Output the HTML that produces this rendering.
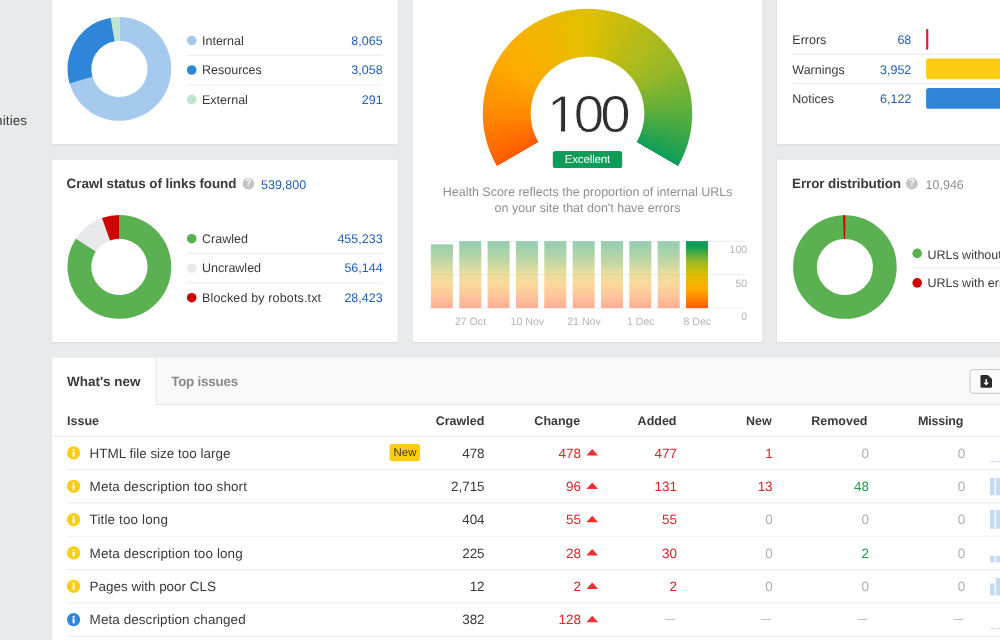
<!DOCTYPE html>
<html lang="en"><head><meta charset="utf-8"><title>Site Audit</title>
<style>
html,body{margin:0;padding:0;background:#e9eaec}
body{width:1000px;height:640px;overflow:hidden;background:#e9eaec;font-family:"Liberation Sans",sans-serif;font-size:12.5px;color:#3a3a3a;position:relative;text-rendering:geometricPrecision}
#w{position:absolute;left:0;top:0;width:1000px;height:640px;overflow:hidden;will-change:transform}
.abs{position:absolute}
.t{position:absolute;white-space:nowrap;line-height:20px}
svg{position:absolute;left:0;top:0}
</style></head>
<body>
<div id="w">
<svg width="1000" height="640" viewBox="0 0 1000 640"><defs><linearGradient id="bg" gradientUnits="userSpaceOnUse" x1="0" y1="241.1" x2="0" y2="308.15"><stop offset="0" stop-color="#0e9d58"/><stop offset="0.08" stop-color="#0e9d58"/><stop offset="0.3" stop-color="#98b828"/><stop offset="0.5" stop-color="#e0c000"/><stop offset="0.72" stop-color="#ffaa00"/><stop offset="1" stop-color="#ff5c00"/></linearGradient><linearGradient id="bp" gradientUnits="userSpaceOnUse" x1="0" y1="241.1" x2="0" y2="308.15"><stop offset="0" stop-color="#99ceaf"/><stop offset="0.08" stop-color="#9bcfae"/><stop offset="0.3" stop-color="#c0d7a4"/><stop offset="0.47" stop-color="#e7de9e"/><stop offset="0.62" stop-color="#f9da9b"/><stop offset="0.8" stop-color="#ffc89b"/><stop offset="1" stop-color="#ffad97"/></linearGradient></defs>
<rect x="50.70" y="-21.00" width="348.20" height="167.00" fill="#000" fill-opacity="0.018"/>
<rect x="51.40" y="-20.40" width="346.80" height="165.60" fill="#000" fill-opacity="0.02"/>
<rect x="51.90" y="-20.00" width="345.80" height="164.00" fill="#fff"/>
<rect x="50.70" y="158.60" width="348.20" height="185.40" fill="#000" fill-opacity="0.018"/>
<rect x="51.40" y="159.20" width="346.80" height="184.00" fill="#000" fill-opacity="0.02"/>
<rect x="51.90" y="159.60" width="345.80" height="182.40" fill="#fff"/>
<rect x="411.60" y="-21.00" width="351.80" height="365.00" fill="#000" fill-opacity="0.018"/>
<rect x="412.30" y="-20.40" width="350.40" height="363.60" fill="#000" fill-opacity="0.02"/>
<rect x="412.80" y="-20.00" width="349.40" height="362.00" fill="#fff"/>
<rect x="775.80" y="-21.00" width="255.40" height="167.00" fill="#000" fill-opacity="0.018"/>
<rect x="776.50" y="-20.40" width="254.00" height="165.60" fill="#000" fill-opacity="0.02"/>
<rect x="777.00" y="-20.00" width="253.00" height="164.00" fill="#fff"/>
<rect x="775.80" y="158.60" width="255.40" height="185.40" fill="#000" fill-opacity="0.018"/>
<rect x="776.50" y="159.20" width="254.00" height="184.00" fill="#000" fill-opacity="0.02"/>
<rect x="777.00" y="159.60" width="253.00" height="182.40" fill="#fff"/>
<rect x="50.70" y="356.50" width="980.50" height="345.50" fill="#000" fill-opacity="0.018"/>
<rect x="51.40" y="357.10" width="979.10" height="344.10" fill="#000" fill-opacity="0.02"/>
<rect x="51.90" y="357.50" width="978.10" height="342.50" fill="#fff"/>
<path fill="#a6caee" d="M119.40 17.00A51.9 51.9 0 1 1 69.42 82.88L92.34 76.47A28.1 28.1 0 1 0 119.40 40.80Z"/>
<path fill="#2f86d8" d="M69.57 83.40A51.9 51.9 0 0 1 111.12 17.66L114.92 41.16A28.1 28.1 0 0 0 92.42 76.75Z"/>
<path fill="#c0e6d2" d="M110.59 17.75A51.9 51.9 0 0 1 119.40 17.00L119.40 40.80A28.1 28.1 0 0 0 114.63 41.21Z"/>
<circle cx="191.70" cy="40.50" r="4.80" fill="#a6caee"/>
<rect x="187.00" y="54.85" width="195.20" height="1.00" fill="#ebebeb"/>
<circle cx="191.70" cy="70.00" r="4.80" fill="#2f86d8"/>
<rect x="187.00" y="84.35" width="195.20" height="1.00" fill="#ebebeb"/>
<circle cx="191.70" cy="99.50" r="4.80" fill="#c0e6d2"/>
<circle cx="248.40" cy="183.70" r="5.85" fill="#c4c4c4"/>
<path fill="#5bb052" d="M119.40 215.00A51.9 51.9 0 1 1 76.17 238.18L96.00 251.35A28.1 28.1 0 1 0 119.40 238.80Z"/>
<path fill="#e8e9ec" d="M75.87 238.63A51.9 51.9 0 0 1 102.54 217.81L110.27 240.32A28.1 28.1 0 0 0 95.83 251.60Z"/>
<path fill="#d00000" d="M102.03 217.99A51.9 51.9 0 0 1 119.40 215.00L119.40 238.80A28.1 28.1 0 0 0 109.99 240.42Z"/>
<circle cx="191.70" cy="238.70" r="4.80" fill="#5bb052"/>
<rect x="187.00" y="252.80" width="195.20" height="1.00" fill="#ebebeb"/>
<circle cx="191.70" cy="268.20" r="4.80" fill="#e8e9ec"/>
<rect x="187.00" y="282.30" width="195.20" height="1.00" fill="#ebebeb"/>
<circle cx="191.70" cy="297.70" r="4.80" fill="#d00000"/>
<rect x="552.80" y="150.90" width="69.40" height="17.10" rx="2.6" fill="#0e9d58"/>
<rect x="428.60" y="240.80" width="316.60" height="1.00" fill="#eeeeee"/>
<rect x="428.60" y="274.10" width="316.60" height="1.00" fill="#eeeeee"/>
<rect x="428.60" y="307.60" width="316.60" height="1.00" fill="#eeeeee"/>
<rect x="430.90" y="244.40" width="22.00" height="63.75" fill="url(#bp)"/>
<rect x="430.90" y="274.10" width="22.00" height="1.00" fill="#000" fill-opacity="0.05"/>
<rect x="459.25" y="241.10" width="22.00" height="67.05" fill="url(#bp)"/>
<rect x="459.25" y="274.10" width="22.00" height="1.00" fill="#000" fill-opacity="0.05"/>
<rect x="487.60" y="241.10" width="22.00" height="67.05" fill="url(#bp)"/>
<rect x="487.60" y="274.10" width="22.00" height="1.00" fill="#000" fill-opacity="0.05"/>
<rect x="515.95" y="241.10" width="22.00" height="67.05" fill="url(#bp)"/>
<rect x="515.95" y="274.10" width="22.00" height="1.00" fill="#000" fill-opacity="0.05"/>
<rect x="544.30" y="241.10" width="22.00" height="67.05" fill="url(#bp)"/>
<rect x="544.30" y="274.10" width="22.00" height="1.00" fill="#000" fill-opacity="0.05"/>
<rect x="572.65" y="241.10" width="22.00" height="67.05" fill="url(#bp)"/>
<rect x="572.65" y="274.10" width="22.00" height="1.00" fill="#000" fill-opacity="0.05"/>
<rect x="601.00" y="241.10" width="22.00" height="67.05" fill="url(#bp)"/>
<rect x="601.00" y="274.10" width="22.00" height="1.00" fill="#000" fill-opacity="0.05"/>
<rect x="629.35" y="241.10" width="22.00" height="67.05" fill="url(#bp)"/>
<rect x="629.35" y="274.10" width="22.00" height="1.00" fill="#000" fill-opacity="0.05"/>
<rect x="657.70" y="241.10" width="22.00" height="67.05" fill="url(#bp)"/>
<rect x="657.70" y="274.10" width="22.00" height="1.00" fill="#000" fill-opacity="0.05"/>
<rect x="686.05" y="241.10" width="22.00" height="67.05" fill="url(#bg)"/>
<rect x="686.05" y="274.10" width="22.00" height="1.00" fill="#000" fill-opacity="0.06"/>
<rect x="926.10" y="29.05" width="2.20" height="20.70" rx="1" fill="#d6232b"/>
<rect x="792.50" y="53.65" width="207.50" height="1.00" fill="#ebebeb"/>
<rect x="926.10" y="58.55" width="120.00" height="20.70" rx="2.6" fill="#fccd12"/>
<rect x="792.50" y="83.15" width="207.50" height="1.00" fill="#ebebeb"/>
<rect x="926.10" y="88.05" width="120.00" height="20.70" rx="2.6" fill="#2f86d8"/>
<circle cx="911.90" cy="183.70" r="5.85" fill="#c4c4c4"/>
<circle cx="844.90" cy="267.00" r="39.90" fill="none" stroke="#5bb052" stroke-width="23.80"/>
<path fill="#d00000" d="M843.00 215.23A51.8 51.8 0 0 1 845.35 215.20L845.14 239.00A28.0 28.0 0 0 0 843.87 239.02Z"/>
<circle cx="917.20" cy="253.40" r="4.80" fill="#5bb052"/>
<rect x="912.50" y="267.30" width="87.50" height="1.00" fill="#ebebeb"/>
<circle cx="917.20" cy="282.90" r="4.80" fill="#d00000"/>
<rect x="156.30" y="357.50" width="873.70" height="47.00" fill="#f9f9f9"/>
<rect x="156.30" y="404.00" width="873.70" height="1.00" fill="#e4e4e4"/>
<rect x="155.80" y="357.50" width="1.00" height="47.50" fill="#e4e4e4"/>
<rect x="970.0" y="369.6" width="50" height="23.7" rx="2.8" fill="#fbfbfb" stroke="#c6c6c6" stroke-width="1"/>
<g transform="translate(980.5 374.9) scale(0.958 0.94)"><path d="M1.6 0H7.7L12 4.3V12.4Q12 13.7 10.6 13.7H1.4Q0 13.7 0 12.4V1.4Q0 0 1.6 0Z" fill="#2b2b2b"/><path d="M5.2 4.4H6.8V8.2H9L6 11.4L3 8.2H5.2Z" fill="#fff"/></g>
<rect x="51.90" y="435.80" width="948.10" height="1.00" fill="#e6e6e6"/>
<circle cx="73.60" cy="452.90" r="6.60" fill="#fccd12"/>
<rect x="72.55" y="451.90" width="2.10" height="4.70" fill="#fff"/>
<rect x="72.55" y="449.20" width="2.10" height="1.90" rx="0.6" fill="#fff"/>
<rect x="389.50" y="444.00" width="30.60" height="17.30" rx="3.2" fill="#fccd12"/>
<path d="M592.25 449.10L598.10 455.60H586.40Z" fill="#f03030"/>
<rect x="990.00" y="461.30" width="4.60" height="1.00" fill="#c6dbf3"/>
<rect x="995.90" y="461.30" width="4.60" height="1.00" fill="#c6dbf3"/>
<rect x="67.00" y="469.10" width="933.00" height="1.00" fill="#ebebeb"/>
<circle cx="73.60" cy="486.23" r="6.60" fill="#fccd12"/>
<rect x="72.55" y="485.23" width="2.10" height="4.70" fill="#fff"/>
<rect x="72.55" y="482.53" width="2.10" height="1.90" rx="0.6" fill="#fff"/>
<path d="M592.25 482.43L598.10 488.93H586.40Z" fill="#f03030"/>
<rect x="990.00" y="478.00" width="4.60" height="17.30" fill="#c6dbf3"/>
<rect x="995.90" y="478.00" width="4.60" height="17.30" fill="#c6dbf3"/>
<rect x="67.00" y="502.43" width="933.00" height="1.00" fill="#ebebeb"/>
<circle cx="73.60" cy="519.57" r="6.60" fill="#fccd12"/>
<rect x="72.55" y="518.57" width="2.10" height="4.70" fill="#fff"/>
<rect x="72.55" y="515.87" width="2.10" height="1.90" rx="0.6" fill="#fff"/>
<path d="M592.25 515.77L598.10 522.27H586.40Z" fill="#f03030"/>
<rect x="990.00" y="510.00" width="4.60" height="18.80" fill="#c6dbf3"/>
<rect x="995.90" y="510.00" width="4.60" height="18.80" fill="#c6dbf3"/>
<rect x="67.00" y="535.77" width="933.00" height="1.00" fill="#ebebeb"/>
<circle cx="73.60" cy="552.90" r="6.60" fill="#fccd12"/>
<rect x="72.55" y="551.90" width="2.10" height="4.70" fill="#fff"/>
<rect x="72.55" y="549.20" width="2.10" height="1.90" rx="0.6" fill="#fff"/>
<path d="M592.25 549.10L598.10 555.60H586.40Z" fill="#f03030"/>
<rect x="990.00" y="555.70" width="4.60" height="6.50" fill="#c6dbf3"/>
<rect x="995.90" y="555.70" width="4.60" height="6.50" fill="#c6dbf3"/>
<rect x="67.00" y="569.10" width="933.00" height="1.00" fill="#ebebeb"/>
<circle cx="73.60" cy="586.23" r="6.60" fill="#fccd12"/>
<rect x="72.55" y="585.23" width="2.10" height="4.70" fill="#fff"/>
<rect x="72.55" y="582.53" width="2.10" height="1.90" rx="0.6" fill="#fff"/>
<path d="M592.25 582.43L598.10 588.93H586.40Z" fill="#f03030"/>
<rect x="990.00" y="583.40" width="4.60" height="12.10" fill="#c6dbf3"/>
<rect x="995.90" y="578.00" width="4.60" height="17.50" fill="#c6dbf3"/>
<rect x="67.00" y="602.43" width="933.00" height="1.00" fill="#ebebeb"/>
<circle cx="73.60" cy="619.56" r="6.60" fill="#2f86d8"/>
<rect x="72.55" y="618.56" width="2.10" height="4.70" fill="#fff"/>
<rect x="72.55" y="615.87" width="2.10" height="1.90" rx="0.6" fill="#fff"/>
<path d="M592.25 615.76L598.10 622.26H586.40Z" fill="#f03030"/>
<rect x="990.00" y="627.96" width="4.60" height="1.00" fill="#c6dbf3"/>
<rect x="995.90" y="627.96" width="4.60" height="1.00" fill="#c6dbf3"/>
<rect x="67.00" y="635.76" width="933.00" height="1.00" fill="#ebebeb"/>
</svg>
<div class="abs" style="left:481.8px;top:7.8999999999999915px;width:211.4px;height:211.4px;background:conic-gradient(from -120deg at 50% 50%,#ff5c00 0deg,#ff5c00 0deg,#ff8a00 30deg,#ffaa00 60deg,#f1b600 90deg,#e0c000 120deg,#bcbc14 150deg,#98b828 180deg,#5aae3c 210deg,#0e9d58 240deg,#0e9d58 239.7deg,rgba(14,157,88,0) 240.3deg,rgba(255,92,0,0) 359.7deg,#ff5c00 360deg);-webkit-mask:radial-gradient(circle closest-side,transparent 56.3px,#000 57.3px,#000 104.2px,transparent 105.2px);mask:radial-gradient(circle closest-side,transparent 56.3px,#000 57.3px,#000 104.2px,transparent 105.2px)"></div>
<div id="side" class="t" style="top:110.70px;font-size:13.46px;letter-spacing:0.12px;color:#3a3a3a;right:972.78px;">nities</div>
<div id="l1_0" class="t" style="top:30.50px;font-size:12.5px;left:202.00px;">Internal</div>
<div id="v1_0" class="t" style="top:30.50px;font-size:12.5px;color:#2260b5;right:617.40px;">8,065</div>
<div id="l1_1" class="t" style="top:60.00px;font-size:12.5px;left:202.00px;">Resources</div>
<div id="v1_1" class="t" style="top:60.00px;font-size:12.5px;color:#2260b5;right:617.40px;">3,058</div>
<div id="l1_2" class="t" style="top:89.50px;font-size:12.5px;left:202.00px;">External</div>
<div id="v1_2" class="t" style="top:89.50px;font-size:12.5px;color:#2260b5;right:617.40px;">291</div>
<div id="ttl2" class="t" style="top:173.60px;font-size:13.46px;letter-spacing:-0.078px;font-weight:bold;left:66.60px;">Crawl status of links found</div>
<div id="q1" class="t" style="top:173.90px;font-size:10.3px;color:#fff;font-weight:bold;left:48.40px;width:400px;text-align:center;">?</div>
<div id="ttl2v" class="t" style="top:174.60px;font-size:12.5px;color:#2260b5;left:261.00px;">539,800</div>
<div id="l2_0" class="t" style="top:228.70px;font-size:12.5px;left:202.00px;">Crawled</div>
<div id="v2_0" class="t" style="top:228.70px;font-size:12.5px;color:#2260b5;right:617.40px;">455,233</div>
<div id="l2_1" class="t" style="top:258.20px;font-size:12.5px;left:202.00px;">Uncrawled</div>
<div id="v2_1" class="t" style="top:258.20px;font-size:12.5px;color:#2260b5;right:617.40px;">56,144</div>
<div id="l2_2" class="t" style="top:287.70px;font-size:12.5px;letter-spacing:0.153px;left:202.00px;">Blocked by robots.txt</div>
<div id="v2_2" class="t" style="top:287.70px;font-size:12.5px;color:#2260b5;right:617.40px;">28,423</div>
<div id="score" class="t" style="top:104.60px;font-size:52px;color:#303030;left:386.60px;width:400px;text-align:center;line-height:60px;margin-top:-20px;-webkit-text-stroke:0.8px #fff;letter-spacing:-3.6px;transform:scaleX(1.05);">100</div>
<svg width="40" height="10" viewBox="546 126 40 10" style="left:546px;top:126px"><rect x="546" y="127.95" width="14.92" height="8" fill="#fff"/><rect x="565.08" y="127.95" width="16" height="8" fill="#fff"/></svg>
<div id="exc" class="t" style="top:149.60px;font-size:11.5px;letter-spacing:-0.135px;color:#fff;left:387.43px;width:400px;text-align:center;">Excellent</div>
<div id="hs1" class="t" style="top:182.10px;font-size:12.5px;color:#8f8f8f;left:387.60px;width:400px;text-align:center;">Health Score reflects the proportion of internal URLs</div>
<div id="hs2" class="t" style="top:197.60px;font-size:12.5px;color:#8f8f8f;left:387.50px;width:400px;text-align:center;">on your site that don't have errors</div>
<div id="ay0" class="t" style="top:240.30px;font-size:10.6px;color:#b4b4b4;right:252.80px;">100</div>
<div id="ay1" class="t" style="top:273.70px;font-size:10.6px;color:#b4b4b4;right:252.80px;">50</div>
<div id="ay2" class="t" style="top:306.90px;font-size:10.6px;color:#b4b4b4;right:252.80px;">0</div>
<div id="ax0" class="t" style="top:311.50px;font-size:10.6px;color:#b4b4b4;left:270.50px;width:400px;text-align:center;">27 Oct</div>
<div id="ax1" class="t" style="top:311.50px;font-size:10.6px;color:#b4b4b4;left:327.30px;width:400px;text-align:center;">10 Nov</div>
<div id="ax2" class="t" style="top:311.50px;font-size:10.6px;color:#b4b4b4;left:384.00px;width:400px;text-align:center;">21 Nov</div>
<div id="ax3" class="t" style="top:311.50px;font-size:10.6px;color:#b4b4b4;left:440.80px;width:400px;text-align:center;">1 Dec</div>
<div id="ax4" class="t" style="top:311.50px;font-size:10.6px;color:#b4b4b4;left:497.30px;width:400px;text-align:center;">8 Dec</div>
<div id="r1_0" class="t" style="top:30.10px;font-size:12.5px;left:792.30px;">Errors</div>
<div id="rv1_0" class="t" style="top:30.10px;font-size:12.5px;color:#2260b5;right:88.70px;">68</div>
<div id="r1_1" class="t" style="top:59.60px;font-size:12.5px;left:792.30px;">Warnings</div>
<div id="rv1_1" class="t" style="top:59.60px;font-size:12.5px;color:#2260b5;right:88.70px;">3,952</div>
<div id="r1_2" class="t" style="top:89.10px;font-size:12.5px;left:792.30px;">Notices</div>
<div id="rv1_2" class="t" style="top:89.10px;font-size:12.5px;color:#2260b5;right:88.70px;">6,122</div>
<div id="ttl3" class="t" style="top:173.60px;font-size:13.46px;letter-spacing:-0.09px;font-weight:bold;left:792.00px;">Error distribution</div>
<div id="q2" class="t" style="top:173.90px;font-size:10.3px;color:#fff;font-weight:bold;left:711.90px;width:400px;text-align:center;">?</div>
<div id="ttl3v" class="t" style="top:174.60px;font-size:12.5px;color:#8c8c8c;left:925.60px;">10,946</div>
<div id="l3_0" class="t" style="top:244.50px;font-size:12.5px;left:927.40px;">URLs without errors</div>
<div id="l3_1" class="t" style="top:272.90px;font-size:12.5px;left:927.40px;">URLs with errors</div>
<div id="tab1" class="t" style="top:371.50px;font-size:13.46px;font-weight:bold;left:67.00px;">What's new</div>
<div id="tab2" class="t" style="top:371.50px;font-size:13.46px;letter-spacing:-0.26px;color:#8a8a8a;font-weight:bold;left:171.20px;">Top issues</div>
<div id="h0" class="t" style="top:411.10px;font-size:12.5px;font-weight:bold;left:67.00px;">Issue</div>
<div id="h1" class="t" style="top:411.10px;font-size:12.5px;font-weight:bold;right:515.70px;">Crawled</div>
<div id="h2" class="t" style="top:411.10px;font-size:12.5px;font-weight:bold;right:419.80px;">Change</div>
<div id="h3" class="t" style="top:411.10px;font-size:12.5px;font-weight:bold;right:323.50px;">Added</div>
<div id="h4" class="t" style="top:411.10px;font-size:12.5px;font-weight:bold;right:228.30px;">New</div>
<div id="h5" class="t" style="top:411.10px;font-size:12.5px;font-weight:bold;right:132.50px;">Removed</div>
<div id="h6" class="t" style="top:411.10px;font-size:12.5px;letter-spacing:-0.2px;font-weight:bold;right:36.80px;">Missing</div>
<div id="n0" class="t" style="top:443.60px;font-size:13.46px;left:89.60px;">HTML file size too large</div>
<div id="newb" class="t" style="top:442.60px;font-size:11.4px;color:#333;left:205.00px;width:400px;text-align:center;">New</div>
<div id="c0" class="t" style="top:443.60px;font-size:13.46px;right:515.40px;">478</div>
<div id="ch0" class="t" style="top:443.60px;font-size:13.46px;color:#d9232b;right:419.00px;">478</div>
<div id="a0" class="t" style="top:443.60px;font-size:13.46px;color:#d9232b;right:323.10px;">477</div>
<div id="nw0" class="t" style="top:443.60px;font-size:13.46px;color:#d9232b;right:227.40px;">1</div>
<div id="rm0" class="t" style="top:443.60px;font-size:13.46px;color:#b0b0b0;right:131.00px;">0</div>
<div id="ms0" class="t" style="top:443.60px;font-size:13.46px;color:#b0b0b0;right:34.80px;">0</div>
<div id="n1" class="t" style="top:476.93px;font-size:13.46px;letter-spacing:0.1px;left:89.60px;">Meta description too short</div>
<div id="c1" class="t" style="top:476.93px;font-size:13.46px;right:515.40px;">2,715</div>
<div id="ch1" class="t" style="top:476.93px;font-size:13.46px;color:#d9232b;right:419.00px;">96</div>
<div id="a1" class="t" style="top:476.93px;font-size:13.46px;color:#d9232b;right:323.10px;">131</div>
<div id="nw1" class="t" style="top:476.93px;font-size:13.46px;color:#d9232b;right:227.40px;">13</div>
<div id="rm1" class="t" style="top:476.93px;font-size:13.46px;color:#1e9b4b;right:131.00px;">48</div>
<div id="ms1" class="t" style="top:476.93px;font-size:13.46px;color:#b0b0b0;right:34.80px;">0</div>
<div id="n2" class="t" style="top:510.27px;font-size:13.46px;letter-spacing:0.138px;left:89.60px;">Title too long</div>
<div id="c2" class="t" style="top:510.27px;font-size:13.46px;right:515.40px;">404</div>
<div id="ch2" class="t" style="top:510.27px;font-size:13.46px;color:#d9232b;right:419.00px;">55</div>
<div id="a2" class="t" style="top:510.27px;font-size:13.46px;color:#d9232b;right:323.10px;">55</div>
<div id="nw2" class="t" style="top:510.27px;font-size:13.46px;color:#b0b0b0;right:227.40px;">0</div>
<div id="rm2" class="t" style="top:510.27px;font-size:13.46px;color:#b0b0b0;right:131.00px;">0</div>
<div id="ms2" class="t" style="top:510.27px;font-size:13.46px;color:#b0b0b0;right:34.80px;">0</div>
<div id="n3" class="t" style="top:543.60px;font-size:13.46px;letter-spacing:0.116px;left:89.60px;">Meta description too long</div>
<div id="c3" class="t" style="top:543.60px;font-size:13.46px;right:515.40px;">225</div>
<div id="ch3" class="t" style="top:543.60px;font-size:13.46px;color:#d9232b;right:419.00px;">28</div>
<div id="a3" class="t" style="top:543.60px;font-size:13.46px;color:#d9232b;right:323.10px;">30</div>
<div id="nw3" class="t" style="top:543.60px;font-size:13.46px;color:#b0b0b0;right:227.40px;">0</div>
<div id="rm3" class="t" style="top:543.60px;font-size:13.46px;color:#1e9b4b;right:131.00px;">2</div>
<div id="ms3" class="t" style="top:543.60px;font-size:13.46px;color:#b0b0b0;right:34.80px;">0</div>
<div id="n4" class="t" style="top:576.93px;font-size:13.46px;left:89.60px;">Pages with poor CLS</div>
<div id="c4" class="t" style="top:576.93px;font-size:13.46px;right:515.40px;">12</div>
<div id="ch4" class="t" style="top:576.93px;font-size:13.46px;color:#d9232b;right:419.00px;">2</div>
<div id="a4" class="t" style="top:576.93px;font-size:13.46px;color:#d9232b;right:323.10px;">2</div>
<div id="nw4" class="t" style="top:576.93px;font-size:13.46px;color:#b0b0b0;right:227.40px;">0</div>
<div id="rm4" class="t" style="top:576.93px;font-size:13.46px;color:#b0b0b0;right:131.00px;">0</div>
<div id="ms4" class="t" style="top:576.93px;font-size:13.46px;color:#b0b0b0;right:34.80px;">0</div>
<div id="n5" class="t" style="top:610.26px;font-size:13.46px;letter-spacing:0.086px;left:89.60px;">Meta description changed</div>
<div id="c5" class="t" style="top:610.26px;font-size:13.46px;right:515.40px;">382</div>
<div id="ch5" class="t" style="top:610.26px;font-size:13.46px;color:#d9232b;right:419.00px;">128</div>
<div id="a5" class="t" style="top:610.37px;font-size:10px;color:#a8a8a8;right:324.70px;">—</div>
<div id="nw5" class="t" style="top:610.37px;font-size:10px;color:#a8a8a8;right:229.00px;">—</div>
<div id="rm5" class="t" style="top:610.37px;font-size:10px;color:#a8a8a8;right:132.60px;">—</div>
<div id="ms5" class="t" style="top:610.37px;font-size:10px;color:#a8a8a8;right:36.40px;">—</div>
</div>
</body></html>
